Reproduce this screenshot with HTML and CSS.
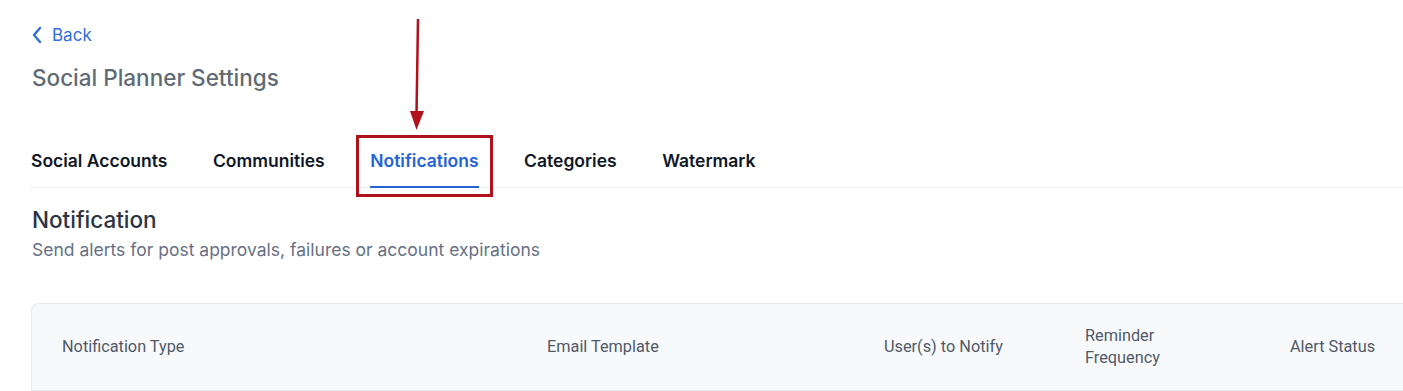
FILE: index.html
```html
<!DOCTYPE html>
<html lang="en">
<head>
  <meta charset="UTF-8">
  <title>Social Planner Settings</title>
  <meta name="viewport" content="width=device-width, initial-scale=1.0">
  <link rel="stylesheet" href="styles.css">
</head>
<body>
  <div class="page">
    <a class="back" href="#">
      <svg class="back-icon" width="12" height="18" viewBox="0 0 12 18" fill="none">
        <path d="M9 2 L3 9 L9 16" stroke="currentColor" stroke-width="2.4" stroke-linecap="round" stroke-linejoin="round"/>
      </svg>
      <span>Back</span>
    </a>
    <h1 class="title">Social Planner Settings</h1>

    <nav class="tabs">
      <a class="tab" href="#">Social Accounts</a>
      <a class="tab" href="#">Communities</a>
      <a class="tab active" href="#">Notifications
        <span class="callout-box"></span>
        <svg class="callout-arrow" width="20" height="112" viewBox="0 0 20 112">
          <path d="M11 0 L9.5 96" stroke="#b0121b" stroke-width="2.5"/>
          <path d="M3 92 L17 92 L9.5 111 Z" fill="#b0121b"/>
        </svg>
      </a>
      <a class="tab" href="#">Categories</a>
      <a class="tab" href="#">Watermark</a>
    </nav>

    <section class="section">
      <h2 class="section-title">Notification</h2>
      <p class="section-desc">Send alerts for post approvals, failures or account expirations</p>
    </section>

    <div class="table-card">
      <div class="table-head">
        <div class="col col-type">Notification Type</div>
        <div class="col col-template">Email Template</div>
        <div class="col col-users">User(s) to Notify</div>
        <div class="col col-freq">Reminder<br>Frequency</div>
        <div class="col col-status">Alert Status</div>
      </div>
    </div>
  </div>
</body>
</html>
```

FILE: styles.css
```css
* {
  box-sizing: border-box;
}
body {
  margin: 0;
  background: #fff;
  font-family: Inter, "Noto Sans", sans-serif;
  color: #111827;
  overflow: hidden;
}
.page {
  padding: 24px 0 0 31px;
}
.back {
  display: inline-flex;
  align-items: center;
  gap: 9px;
  color: #2f6fde;
  text-decoration: none;
  font-size: 17px;
  line-height: 22px;
}
.back-icon {
  display: block;
}
.title {
  margin: 16px 0 0 1px;
  font-size: 22.5px;
  font-weight: 500;
  line-height: 28px;
  color: #5f6b75;
}
.tabs {
  display: flex;
  gap: 45.5px;
  margin-top: 57px;
  border-bottom: 1px solid #ebedf0;
}
.tab {
  position: relative;
  display: block;
  padding: 0 0 13px;
  margin-bottom: -1px;
  border-bottom: 2px solid transparent;
  font-size: 17.5px;
  font-weight: 600;
  line-height: 24px;
  color: #101828;
  text-decoration: none;
}
.tab.active {
  color: #2463d6;
  border-bottom-color: #2463d6;
}
.callout-box {
  position: absolute;
  left: -14px;
  right: -14px;
  top: -14px;
  bottom: -11px;
  border: 3px solid #b0121b;
}
.callout-arrow {
  position: absolute;
  left: 37px;
  top: -130px;
}
.section {
  margin-top: 18px;
}
.section-title {
  margin: 0 0 0 1px;
  font-size: 22.5px;
  font-weight: 500;
  line-height: 28px;
  color: #2b3445;
}
.section-desc {
  margin: 4px 0 0 1px;
  font-size: 17.5px;
  line-height: 24px;
  color: #667085;
}
.table-card {
  margin-top: 41px;
  border: 1px solid #e7e9ec;
  border-right: none;
  border-radius: 8px 0 0 0;
  background: #f8f9fb;
}
.table-head {
  display: grid;
  grid-template-columns: 485px 337px 201px 205px 1fr;
  align-items: center;
  height: 87px;
  padding-left: 30px;
  border-bottom: 1px solid #e7e9ec;
  font-family: Roboto, "Liberation Sans", sans-serif;
  font-size: 16.3px;
  line-height: 22px;
  color: #505a68;
}
```
